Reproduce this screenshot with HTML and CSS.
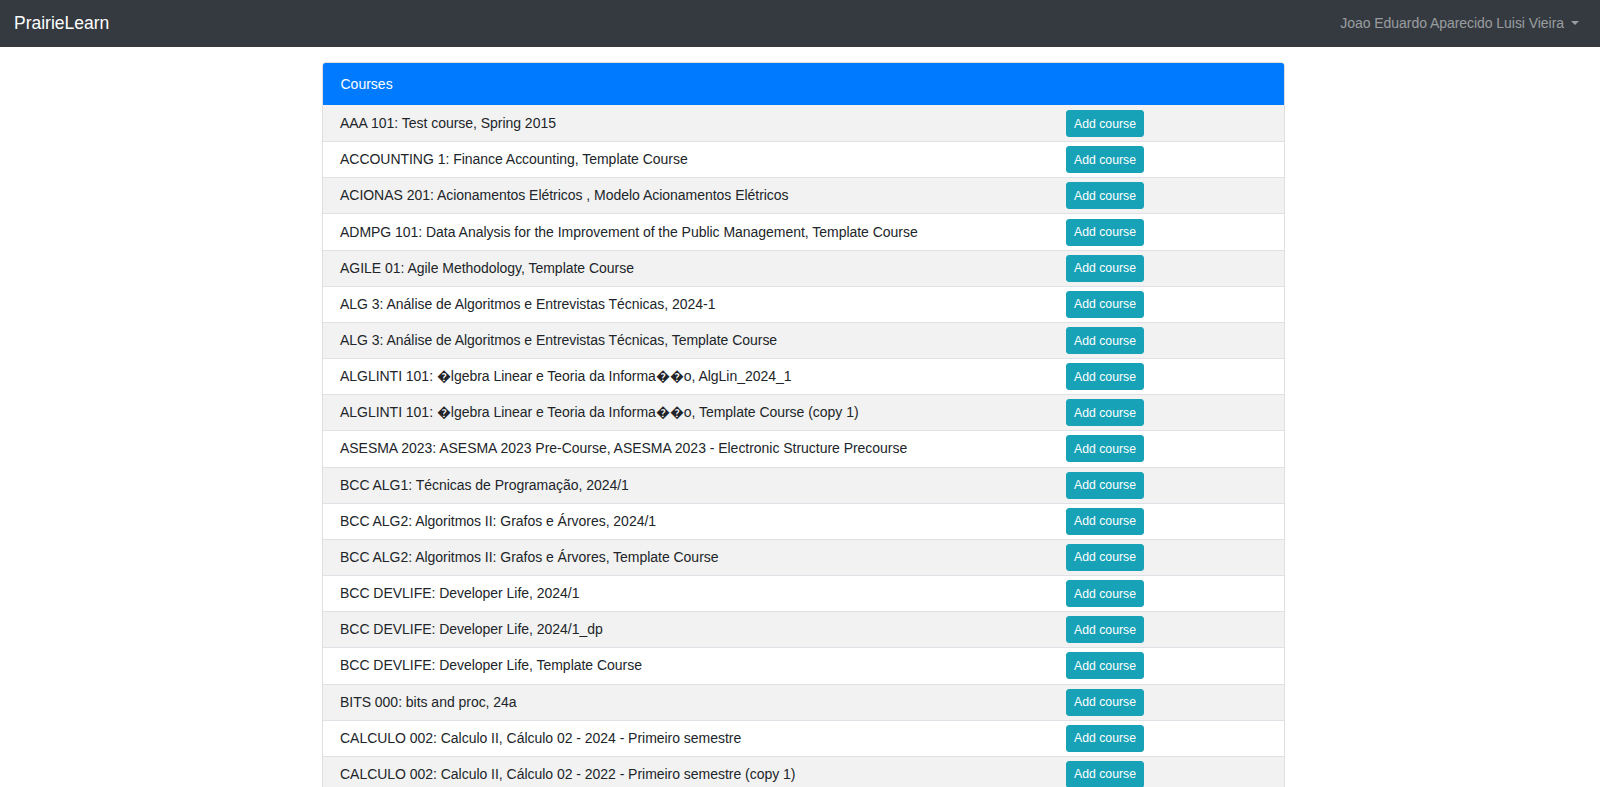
FILE: index.html
```html
<!DOCTYPE html>
<html lang="en">
<head>
<meta charset="utf-8">
<title>PrairieLearn</title>
<link rel="stylesheet" href="styles.css">
</head>
<body>
<nav class="navbar">
  <a class="brand" href="#">PrairieLearn</a>
  <a class="user-link" href="#">Joao Eduardo Aparecido Luisi Vieira<span class="caret"></span></a>
</nav>
<main class="main">
  <div class="card">
    <div class="card-header">Courses</div>
    <div class="rows">
      <div class="row"><div class="name">AAA 101: Test course, Spring 2015</div><div class="act"><button class="btn">Add course</button></div></div>
      <div class="row"><div class="name">ACCOUNTING 1: Finance Accounting, Template Course</div><div class="act"><button class="btn">Add course</button></div></div>
      <div class="row"><div class="name">ACIONAS 201: Acionamentos Elétricos , Modelo Acionamentos Elétricos</div><div class="act"><button class="btn">Add course</button></div></div>
      <div class="row"><div class="name">ADMPG 101: Data Analysis for the Improvement of the Public Management, Template Course</div><div class="act"><button class="btn">Add course</button></div></div>
      <div class="row"><div class="name">AGILE 01: Agile Methodology, Template Course</div><div class="act"><button class="btn">Add course</button></div></div>
      <div class="row"><div class="name">ALG 3: Análise de Algoritmos e Entrevistas Técnicas, 2024-1</div><div class="act"><button class="btn">Add course</button></div></div>
      <div class="row"><div class="name">ALG 3: Análise de Algoritmos e Entrevistas Técnicas, Template Course</div><div class="act"><button class="btn">Add course</button></div></div>
      <div class="row"><div class="name">ALGLINTI 101: �lgebra Linear e Teoria da Informa��o, AlgLin_2024_1</div><div class="act"><button class="btn">Add course</button></div></div>
      <div class="row"><div class="name">ALGLINTI 101: �lgebra Linear e Teoria da Informa��o, Template Course (copy 1)</div><div class="act"><button class="btn">Add course</button></div></div>
      <div class="row"><div class="name">ASESMA 2023: ASESMA 2023 Pre-Course, ASESMA 2023 - Electronic Structure Precourse</div><div class="act"><button class="btn">Add course</button></div></div>
      <div class="row"><div class="name">BCC ALG1: Técnicas de Programação, 2024/1</div><div class="act"><button class="btn">Add course</button></div></div>
      <div class="row"><div class="name">BCC ALG2: Algoritmos II: Grafos e Árvores, 2024/1</div><div class="act"><button class="btn">Add course</button></div></div>
      <div class="row"><div class="name">BCC ALG2: Algoritmos II: Grafos e Árvores, Template Course</div><div class="act"><button class="btn">Add course</button></div></div>
      <div class="row"><div class="name">BCC DEVLIFE: Developer Life, 2024/1</div><div class="act"><button class="btn">Add course</button></div></div>
      <div class="row"><div class="name">BCC DEVLIFE: Developer Life, 2024/1_dp</div><div class="act"><button class="btn">Add course</button></div></div>
      <div class="row"><div class="name">BCC DEVLIFE: Developer Life, Template Course</div><div class="act"><button class="btn">Add course</button></div></div>
      <div class="row"><div class="name">BITS 000: bits and proc, 24a</div><div class="act"><button class="btn">Add course</button></div></div>
      <div class="row"><div class="name">CALCULO 002: Calculo II, Cálculo 02 - 2024 - Primeiro semestre</div><div class="act"><button class="btn">Add course</button></div></div>
      <div class="row"><div class="name">CALCULO 002: Calculo II, Cálculo 02 - 2022 - Primeiro semestre (copy 1)</div><div class="act"><button class="btn">Add course</button></div></div>
    </div>
  </div>
</main>
</body>
</html>
```

FILE: styles.css
```css
* { box-sizing: border-box; }
html, body { margin: 0; padding: 0; }
body {
  font-family: "Liberation Sans", Arial, sans-serif;
  font-size: 14px;
  line-height: 1.5;
  color: #212529;
  background: #fff;
}
.navbar {
  height: 47px;
  background: #343a40;
  display: flex;
  align-items: center;
  justify-content: space-between;
  padding: 0 14px;
}
.brand {
  color: #fff;
  font-size: 17.5px;
  text-decoration: none;
  line-height: 1.5;
}
.user-link {
  color: rgba(255, 255, 255, 0.5);
  text-decoration: none;
  font-size: 14px;
  padding: 0 7px;
  letter-spacing: -0.05px;
}
.caret {
  display: inline-block;
  margin-left: 7px;
  vertical-align: 3.5px;
  border-top: 4.2px solid;
  border-left: 4.2px solid transparent;
  border-right: 4.2px solid transparent;
}
.main {
  padding: 15px 0 0 322px;
}
.card {
  width: 963px;
  border: 1px solid rgba(0, 0, 0, 0.125);
  border-radius: 3.5px;
  overflow: hidden;
}
.card-header {
  background: #007bff;
  color: #fff;
  padding: 10.5px 17.5px;
  line-height: 21px;
}
.row {
  display: grid;
  grid-template-columns: 726px auto;
  align-items: center;
  padding: 4.08px 0 4.08px 17px;
  border-top: 1px solid #dee2e6;
}
.name { letter-spacing: -0.03px; }
.rows .row:first-child { border-top: 0; padding-top: 5.08px; }
.rows .row:nth-child(odd) { background: #f2f2f2; }
.act { display: flex; }
.btn {
  font-family: "Liberation Sans", Arial, sans-serif;
  font-size: 12.25px;
  line-height: 18px;
  padding: 3.5px 7px;
  color: #fff;
  background: #17a2b8;
  border: 1px solid #17a2b8;
  border-radius: 3px;
  cursor: pointer;
}
```
